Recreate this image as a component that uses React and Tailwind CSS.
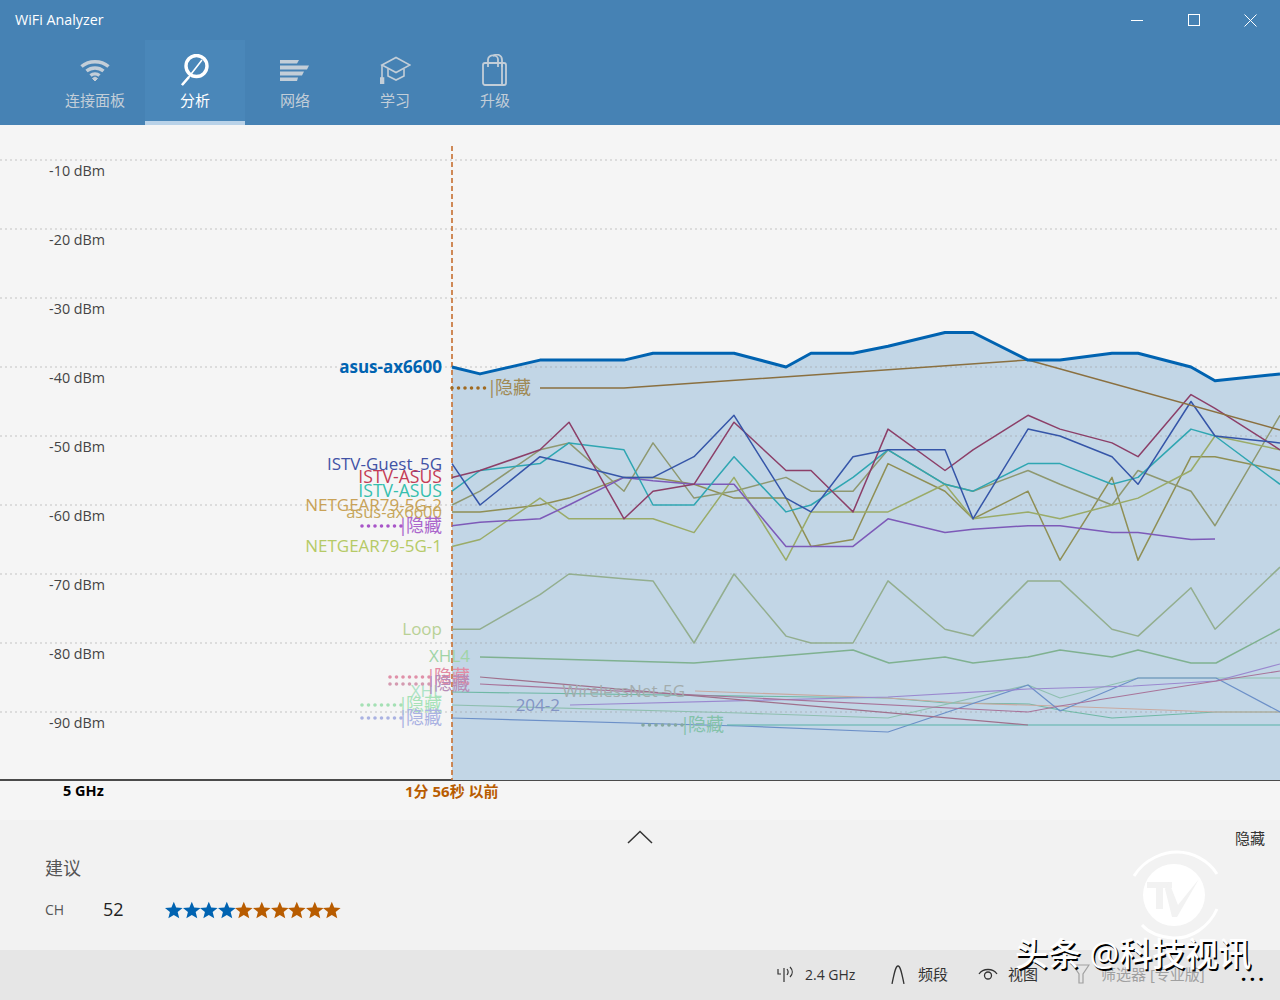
import React from 'react';

// sample columns of the time axis (page x)
const XS = [452, 480, 540, 569, 624, 653, 694, 734, 786, 811, 853, 888, 945, 973, 1028, 1060, 1112, 1138, 1191, 1215, 1280];
const GRID = [-10, -20, -30, -40, -50, -60, -70, -80, -90];

const yOf = (dbm) => 91 + -dbm * 6.9;
// turn a row of dBm readings into points, null means no reading in that column
const row = (values) =>
  values.map((v, i) => (v === null ? null : [XS[i], yOf(v)])).filter(Boolean);
const toPoints = (pts) => pts.map((p) => p.join(',')).join(' ');

const MAIN = row([-40, -41, -39, -39, -39, -38, -38, -38, -40, -38, -38, -37, -35, -35, -39, -39, -38, -38, -40, -42, -41]);

const SERIES = [
  { color: '#8f8f55', points: row([-61, -61, -60, -59, -56, -56, -57, -59, -59, -66, -65, -54, -58, -62, -58, -68, -56, -68, -53, -53, -55]) },
  { color: '#8e9870', points: row([-60, -58, -52, -51, -58, -51, -59, -58, -56, -58, -58, -52, -57, -58, -55, -57, -60, -55, -58, -63, -47]) },
  { color: '#9aab68', points: row([-66, -65, -59, -62, -62, -62, -64, -56, -68, -61, -61, -61, -57, -62, -61, -62, -60, -59, -55, -50, -52]) },
  { color: '#7d5ab8', points: row([-63, -62.5, -62, -60, -56, -56.5, -57, -57, -66, -66, -66, -62, -64, -63.5, -63, -63, -64, -64, -65, null, null]).concat([[1215, 539]]) },
  { color: '#2fa6b2', points: row([-58, -55, -54, -51, -52, -60, -60, -53, -61, -60, -56, -52, -57, -58, -54, -54, -57, -56, -49, -50, -57]) },
  { color: '#8c3f68', points: row([-56, -55, -52, -48, -62, -58, -57, -48, -55, -55, -61, -49, -55, -52, -47, -49, -51, -53, -44, -46, -52]) },
  { color: '#3555a8', points: row([-54, -60, -53, -54, -56, -56, -53, -47, -59, -61, -53, -52, -52, -62, -49, -50, -53, -57, -45, -50, -51]) },
  { color: '#8a7040', points: [[540, 388], [624, 388], [1028, 360], [1280, 430]] },
  { color: '#93ae8f', points: row([-78, -78, -73, -70, -70.7, -71, -80, -70, -79, -80, -80, -71, -78, -79, -71, -71, -78, -79, -72, -78, -69]) },
  { color: '#7fb190', points: [[480, 657], [694, 663], [853, 650], [889, 663], [945, 657], [973, 663], [1028, 657], [1060, 650], [1112, 657], [1138, 650], [1191, 663], [1216, 663], [1280, 629]] },
  { color: '#6fb8a5', thin: true, points: [[452, 692], [888, 698], [947, 703], [1029, 704], [1060, 710], [1112, 718], [1216, 712], [1280, 712]] },
  { color: '#c9a9a0', thin: true, points: [[695, 691], [888, 698], [960, 703], [1057, 706], [1215, 712], [1280, 712]] },
  { color: '#8fbfb0', thin: true, points: [[452, 705], [740, 713], [888, 718], [1028, 685], [1060, 698], [1138, 678], [1280, 678]] },
  { color: '#6c90c8', thin: true, points: [[452, 718], [740, 726], [888, 732], [1028, 685], [1060, 711], [1138, 678], [1216, 678], [1280, 712]] },
  { color: '#58b2a8', thin: true, points: [[727, 725], [1280, 725]] },
  { color: '#9a88cf', thin: true, points: [[570, 705], [888, 697], [1028, 689], [1133, 686], [1216, 681], [1280, 664]] },
  { color: '#a8749a', thin: true, points: [[480, 684], [1028, 712], [1060, 706], [1191, 685], [1280, 671]] },
  { color: '#a0708c', thin: true, points: [[480, 677], [1028, 725]] },
];

const LABELS = [
  { text: 'ISTV-Guest_5G', x: 442, y: 470, color: '#4152a6', size: 17 },
  { text: 'NETGEAR79-5G-2', x: 442, y: 511, color: '#c9a257', size: 17 },
  { text: 'ISTV-ASUS', x: 442, y: 483, color: '#c43c56', size: 17.6 },
  { text: 'ISTV-ASUS', x: 442, y: 497, color: '#35bfae', size: 17.6 },
  { text: 'asus-ax6600', x: 442, y: 518, color: '#c6a75c', size: 16.5 },
  { text: 'NETGEAR79-5G-1', x: 442, y: 552, color: '#b5ca66', size: 17 },
  { text: 'Loop', x: 442, y: 635, color: '#b9d195', size: 17 },
  { text: 'XHL4', x: 470, y: 662, color: '#a0d4a6', size: 17 },
  { text: 'XHL', x: 442, y: 697, color: '#aee3c6', size: 17 },
  { text: '204-2', x: 560, y: 711, color: '#8294c4', size: 17 },
  { text: 'WirelessNet-5G', x: 685, y: 697, color: '#a3acac', size: 17 },
];

// hidden networks: dotted lead-in plus a "|隐藏" tag
const HIDDEN = [
  { from: 452, to: 490, y: 388, dot: '#a06a20', color: '#a08a55', x: 531 },
  { from: 362, to: 402, y: 526, dot: '#a855c8', color: '#aa66cc', x: 442 },
  { from: 390, to: 430, y: 677, dot: '#e090a8', color: '#e38ba3', x: 470 },
  { from: 390, to: 430, y: 684, dot: '#d49ab0', color: '#b78db8', x: 470 },
  { from: 362, to: 402, y: 705, dot: '#a4e0b4', color: '#a6e2b8', x: 442 },
  { from: 362, to: 402, y: 718, dot: '#aab2e2', color: '#aab2e2', x: 442 },
  { from: 643, to: 685, y: 725, dot: '#85a8a0', color: '#84c2aa', x: 724 },
];

function WifiIcon() {
  return (
    <svg width="30" height="23" viewBox="0 0 30 23" fill="none" stroke="currentColor" strokeWidth="3.500">
      <path d="M1.500 7.500C9 1 21 1 28.500 7.500" />
      <path d="M6.500 12C11.500 8 18.500 8 23.500 12" />
      <path d="M10.500 16.500C13 14.500 17 14.500 19.500 16.500" />
      <path d="M12.500 19.500L15 22L17.500 19.500L15 18Z" fill="currentColor" strokeWidth="1" />
    </svg>
  );
}

function AnalyzeIcon() {
  return (
    <svg width="30" height="32" viewBox="0 0 30 32" fill="none" stroke="currentColor">
      <circle cx="16.500" cy="12" r="10.500" strokeWidth="3.400" />
      <path d="M22 6L8 24L2 31" strokeWidth="1.600" />
      <path d="M2 31L9 23" strokeWidth="2.600" />
    </svg>
  );
}

function NetworkIcon() {
  return (
    <svg width="30" height="21" viewBox="0 0 30 21" fill="currentColor">
      <path d="M0 0H19L17 3.500H0Z" />
      <path d="M0 5.500H29L27 9.500H0Z" />
      <path d="M0 11.500H24L22 15.500H0Z" />
      <path d="M0 17.500H18L17 21H0Z" />
    </svg>
  );
}

function CapIcon() {
  return (
    <svg width="31" height="28" viewBox="0 0 31 28" fill="none" stroke="currentColor" strokeWidth="1.600">
      <path d="M2 9L16 1.500L30 9L16 16.500Z" />
      <path d="M8 13V20L16 24L24 20V13" />
      <path d="M2 9V22" />
      <path d="M0.500 22H3.500V27.500H0.500Z" fill="currentColor" />
    </svg>
  );
}

function BagIcon() {
  return (
    <svg width="28" height="32" viewBox="0 0 28 32" fill="none" stroke="currentColor" strokeWidth="1.800">
      <rect x="2" y="9" width="23" height="22" rx="2" />
      <path d="M7 13V5.500C7 0 17 0 17 5.500V13" />
      <path d="M12 2C16 -1 21 1 21 6V13" />
      <path d="M21 9V31" />
    </svg>
  );
}

function Tab({ label, active, children }) {
  return (
    <div
      className={
        active
          ? 'w-[100px] h-[85px] flex flex-col items-center bg-[#4a87b9] text-white border-b-4 border-[#b9d2e8]'
          : 'w-[100px] h-[85px] flex flex-col items-center text-[#c3ced8]'
      }
    >
      <div className="h-[50px] flex items-center justify-center pt-[10px]">{children}</div>
      <span className="text-[15px] leading-[20px]">{label}</span>
    </div>
  );
}

function Star({ color }) {
  return (
    <svg width="17.600" height="20" viewBox="0 0 20 20" fill={color} className="shrink-0 overflow-visible">
      <path d="M10 0.500L12.700 7.300L20 7.700L14.400 12.400L16.200 19.500L10 15.600L3.800 19.500L5.600 12.400L0 7.700L7.300 7.300Z" />
    </svg>
  );
}

function Chart() {
  const fill = `452,780 ${toPoints(MAIN)} 1280,780`;
  return (
    <div className="relative h-[656px] border-b-2 border-[#4a4a4a]">
      <svg width="1280" height="656" viewBox="0 125 1280 656" className="block">
        <polygon points={fill} fill="#c2d6e6" />

        {GRID.map((d) => (
          <g key={d}>
            <line x1="0" x2="1280" y1={yOf(d)} y2={yOf(d)} stroke="#9a9a9a" strokeOpacity="0.35" strokeWidth="1.500" strokeDasharray="2 3" />
            <text x="105" y={yOf(d) + 15.500} textAnchor="end" fontSize="14.300" fill="#444444">{`${d} dBm`}</text>
          </g>
        ))}

        <line x1="452" x2="452" y1="146" y2="780" stroke="#c8763a" strokeOpacity="0.85" strokeWidth="2" strokeDasharray="5 3" />

        {SERIES.map((s, i) => (
          <polyline key={i} points={toPoints(s.points)} fill="none" stroke={s.color} strokeWidth={s.thin ? 1.2 : 1.5} strokeLinejoin="round" />
        ))}
        <polyline points={toPoints(MAIN)} fill="none" stroke="#0063b1" strokeWidth="3" strokeLinejoin="round" />

        <text x="442" y="373" textAnchor="end" fontSize="17" fontWeight="700" fill="#0063b1">asus-ax6600</text>
        {LABELS.map((l, i) => (
          <text key={i} x={l.x} y={l.y} textAnchor="end" fontSize={l.size} fill={l.color}>{l.text}</text>
        ))}
        {HIDDEN.map((h, i) => (
          <g key={i}>
            <line x1={h.from} x2={h.to} y1={h.y} y2={h.y} stroke={h.dot} strokeWidth="3.600" strokeLinecap="round" strokeDasharray="0 6.500" />
            <text x={h.x} y={h.y + 6} textAnchor="end" fontSize="18" fill={h.color}>|<tspan dx="-2">隐藏</tspan></text>
          </g>
        ))}
      </svg>
    </div>
  );
}

function LogoMark() {
  return (
    <svg width="100" height="96" viewBox="0 0 100 96" fill="none" className="absolute left-[1125px] top-[849px]">
      <path d="M9 27C20 9 40 3 52 3C68 3 84 12 92 25" stroke="#ffffff" strokeWidth="3" />
      <path d="M92 60C84 78 66 90 48 89C36 88 24 84 17 76" stroke="#ffffff" strokeWidth="3" />
      <circle cx="49" cy="46" r="31" fill="#ffffff" />
      <path d="M22 33H47V39H38V60H31V39H22Z" fill="#f2f2f2" />
      <path d="M44 33L53 56L74 30L52 68H47L40 40Z" fill="#f2f2f2" />
    </svg>
  );
}

export default function App() {
  return (
    <div className="relative w-[1280px] h-[1000px] overflow-hidden flex flex-col bg-[#f5f5f5] text-[#333333] font-['Open_Sans','Noto_Sans_CJK_SC',sans-serif]">
      {/* Header */}
      <header className="h-[125px] shrink-0 flex flex-col bg-[#4682b4]">
        <div className="h-[40px] flex items-center justify-between">
          <span className="pl-[15px] text-[14.300px] text-white">WiFi Analyzer</span>
          <div className="flex items-center pr-[1px] text-white">
            <div className="w-[57px] h-[40px] flex items-center justify-center">
              <span className="w-[12px] h-[1px] bg-white" />
            </div>
            <div className="w-[57px] h-[40px] flex items-center justify-center">
              <span className="w-[12px] h-[12px] border border-white" />
            </div>
            <div className="w-[57px] h-[40px] flex items-center justify-center">
              <svg width="13" height="13" viewBox="0 0 13 13" stroke="currentColor" strokeWidth="1"><path d="M0.500 0.500L12.500 12.500M12.500 0.500L0.500 12.500" /></svg>
            </div>
          </div>
        </div>
        <nav className="flex pl-[45px]">
          <Tab label="连接面板"><WifiIcon /></Tab>
          <Tab label="分析" active><AnalyzeIcon /></Tab>
          <Tab label="网络"><NetworkIcon /></Tab>
          <Tab label="学习"><CapIcon /></Tab>
          <Tab label="升级"><BagIcon /></Tab>
        </nav>
      </header>

      {/* Signal chart */}
      <Chart />

      <div className="h-[39px] shrink-0 relative flex font-bold leading-[20px]">
        <span className="w-[405px] pl-[63px] text-[14.500px] text-black">5 GHz</span>
        <span className="text-[15px] text-[#b85c00]">1分 56秒 以前</span>
      </div>

      {/* Recommendation panel */}
      <section className="h-[130px] shrink-0 flex flex-col bg-[#f2f2f2] px-[45px] relative">
        <div className="flex justify-between items-start -mx-[30px]">
          <span className="w-[30px]" />
          <svg width="26" height="14" viewBox="0 0 26 14" fill="none" stroke="#333333" strokeWidth="1.500" className="mt-[10px]">
            <path d="M1 13L13 1.500L25 13" />
          </svg>
          <span className="w-[30px] text-[15px] leading-[20px] text-[#333333] mt-[8px]">隐藏</span>
        </div>
        <span className="mt-[8px] text-[18px] leading-[24px] text-[#555555]">建议</span>
        <div className="flex items-center mt-[16px]">
          <span className="w-[58px] text-[14px] text-[#555555]">CH</span>
          <span className="w-[62px] text-[18px] text-[#222222]">52</span>
          <div className="flex">
            {[0, 1, 2, 3].map((i) => <Star key={i} color="#0063b1" />)}
            {[0, 1, 2, 3, 4, 5].map((i) => <Star key={i} color="#b85c00" />)}
          </div>
        </div>
      </section>

      {/* Command bar */}
      <footer className="h-[50px] shrink-0 flex items-center bg-[#e6e6e6] text-[15px] text-[#333333] pb-[2px]">
        <div className="flex items-center ml-[777px] w-[114px]">
          <svg width="18" height="18" viewBox="0 0 18 18" fill="none" stroke="currentColor" strokeWidth="1.200">
            <path d="M1 4V9H4M7 3V17M10 4C11.500 6 11.500 8 10 10M13 2C16 5 16 9 13 12" />
          </svg>
          <span className="ml-[10px] text-[14px]">2.4 GHz</span>
        </div>
        <div className="flex items-center w-[87px]">
          <svg width="14" height="19" viewBox="0 0 14 19" fill="none" stroke="currentColor" strokeWidth="1.300">
            <path d="M1 19C3 9 4.500 1 7 1C9.500 1 11 9 13 19" />
          </svg>
          <span className="ml-[13px]">频段</span>
        </div>
        <div className="flex items-center w-[94px]">
          <svg width="20" height="14" viewBox="0 0 20 14" fill="none" stroke="currentColor" strokeWidth="1.300">
            <path d="M1 7C5 1 15 1 19 7" />
            <circle cx="10" cy="8.500" r="3.500" />
          </svg>
          <span className="ml-[10px]">视图</span>
        </div>
        <div className="flex items-center text-[#a0a0a0]">
          <svg width="18" height="20" viewBox="0 0 18 20" fill="none" stroke="currentColor" strokeWidth="1.200">
            <path d="M1 1H17L11 10V19H7V10Z" />
          </svg>
          <span className="ml-[11px]">筛选器 [专业版]</span>
        </div>
        <span className="ml-[36px] text-[20px] leading-none tracking-[3px] text-black font-bold">...</span>
      </footer>

      {/* Site watermark sits over the panel and command bar */}
      <LogoMark />
      <span className="absolute left-[1015px] top-[932px] text-[33px] leading-[44px] font-medium text-white [text-shadow:1.500px_1.500px_0_#000000]">头条 @科技视讯</span>
    </div>
  );
}
